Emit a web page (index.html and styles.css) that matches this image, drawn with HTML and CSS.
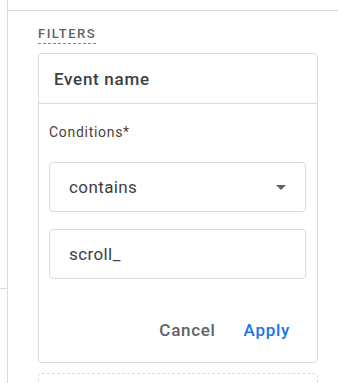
FILE: index.html
```html
<!DOCTYPE html>
<html>
<head>
<meta charset="utf-8">
<link rel="stylesheet" href="styles.css">
</head>
<body>
<div class="page">
  <div class="rail"><div class="rail-line"></div></div>
  <div class="panel">
    <div class="topbar"></div>
    <div class="section">
      <div class="label"><span class="label-text">FILTERS</span></div>
      <div class="card">
        <div class="card-header">Event name</div>
        <div class="card-body">
          <div class="field-label">Conditions*</div>
          <div class="select">
            <span class="select-value">contains</span>
            <svg class="caret" width="10" height="5" viewBox="0 0 10 5"><path d="M0 0h10L5 5z" fill="#5f6368"/></svg>
          </div>
          <div class="input">scroll_</div>
          <div class="actions">
            <button class="btn btn-cancel">Cancel</button>
            <button class="btn btn-apply">Apply</button>
          </div>
        </div>
      </div>
      <div class="card-ghost"></div>
    </div>
  </div>
</div>
</body>
</html>
```

FILE: styles.css
```css
html, body {
  margin: 0;
  padding: 0;
  background: #ffffff;
  font-family: Roboto, "Liberation Sans", sans-serif;
  overflow: hidden;
}

.page {
  display: flex;
  width: 338px;
  height: 383px;
  overflow: hidden;
}

.rail {
  width: 7px;
  flex: none;
  padding-top: 288px;
}

.rail-line {
  border-bottom: 1px solid #dadce0;
}

.panel {
  flex: 1;
  border-left: 1px solid #dadce0;
  min-width: 0;
}

.topbar {
  height: 10px;
  border-bottom: 1px solid #dadce0;
}

.section {
  padding: 12px 20px 0 30px;
}

.label {
  height: 30px;
}

.label-text {
  display: inline-block;
  font-size: 13px;
  font-weight: 500;
  letter-spacing: 1.5px;
  color: #5f6368;
  line-height: 14px;
  padding-bottom: 2px;
  border-bottom: 1px dashed #80868b;
}

.card {
  border: 1px solid #dadce0;
  border-radius: 4px;
}

.card-header {
  height: 49px;
  border-bottom: 1px solid #dadce0;
  display: flex;
  align-items: center;
  padding-left: 15px;
  font-size: 17px;
  font-weight: 500;
  color: #3c4043;
  letter-spacing: 0.7px;
}

.card-body {
  padding: 18px 11px 14px 10px;
}

.field-label {
  font-size: 14px;
  line-height: 20px;
  color: #4a3f3b;
  letter-spacing: 0.7px;
}

.select,
.input {
  height: 48px;
  border: 1px solid #dadce0;
  border-radius: 4px;
  display: flex;
  align-items: center;
  padding: 0 19px;
  font-size: 17px;
  color: #3c4043;
  letter-spacing: 0.4px;
}

.select {
  margin-top: 20px;
  justify-content: space-between;
}

.select-value {
  flex: 1;
}

.caret {
  display: block;
}

.input {
  margin-top: 17px;
}

.actions {
  margin-top: 33px;
  display: flex;
  justify-content: flex-end;
  gap: 12px;
  padding-right: 8px;
}

.btn {
  background: none;
  border: none;
  font-family: Roboto, "Liberation Sans", sans-serif;
  font-size: 17px;
  font-weight: 500;
  letter-spacing: 0.7px;
  height: 36px;
  padding: 0 8px;
  cursor: pointer;
}

.btn-cancel {
  color: #5f6368;
}

.btn-apply {
  color: #1a73e8;
}

.card-ghost {
  margin-top: 10px;
  height: 40px;
  border: 1px dashed #dadce0;
  border-radius: 4px;
}
```
